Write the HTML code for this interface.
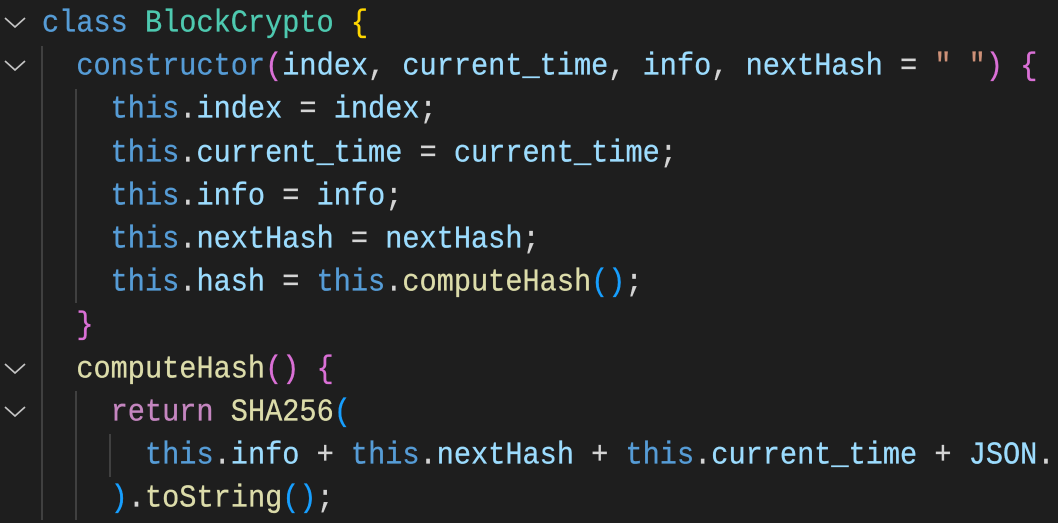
<!DOCTYPE html>
<html><head><style>
html,body{margin:0;padding:0;background:#1e1e1e;width:1058px;height:520px;overflow:hidden}
.l{position:absolute;left:42px;height:43.2px;line-height:43.2px;font-family:"Liberation Mono",monospace;font-size:28.6px;white-space:pre;color:#d4d4d4;transform:scaleY(1.1);transform-origin:0 50%;-webkit-text-stroke:0.3px currentColor;margin-top:2px}
.k{color:#569cd6}.c{color:#4ec9b0}.y{color:#ffd700}.p{color:#da70d6}.v{color:#9cdcfe}.f{color:#dcdcaa}.r{color:#c586c0}.s{color:#ce9178}.b{color:#179fff}
.g{position:absolute;width:2px;background:#404040}
.ch{position:absolute;left:3px;width:24px;height:15px}
</style></head><body>
<svg class="ch" style="top:15px" viewBox="0 0 24 15"><path d="M2 3 L12 12 L22 3" stroke="#c5c5c5" stroke-width="1.7" fill="none"/></svg>
<svg class="ch" style="top:58px" viewBox="0 0 24 15"><path d="M2 3 L12 12 L22 3" stroke="#c5c5c5" stroke-width="1.7" fill="none"/></svg>
<svg class="ch" style="top:361px" viewBox="0 0 24 15"><path d="M2 3 L12 12 L22 3" stroke="#c5c5c5" stroke-width="1.7" fill="none"/></svg>
<svg class="ch" style="top:404px" viewBox="0 0 24 15"><path d="M2 3 L12 12 L22 3" stroke="#c5c5c5" stroke-width="1.7" fill="none"/></svg>
<div class="g" style="left:41px;top:46px;height:474px"></div>
<div class="g" style="left:75px;top:89px;height:214px"></div>
<div class="g" style="left:75px;top:391px;height:129px"></div>
<div class="g" style="left:109px;top:434px;height:43px"></div>
<div class="l" style="top:0"><span class="k">class</span> <span class="c">BlockCrypto</span> <span class="y">{</span></div>
<div class="l" style="top:43.2px">  <span class="k">constructor</span><span class="p">(</span><span class="v">index</span>, <span class="v">current_time</span>, <span class="v">info</span>, <span class="v">nextHash</span> = <span class="s">" "</span><span class="p">)</span> <span class="p">{</span></div>
<div class="l" style="top:86.4px">    <span class="k">this</span>.<span class="v">index</span> = <span class="v">index</span>;</div>
<div class="l" style="top:129.6px">    <span class="k">this</span>.<span class="v">current_time</span> = <span class="v">current_time</span>;</div>
<div class="l" style="top:172.8px">    <span class="k">this</span>.<span class="v">info</span> = <span class="v">info</span>;</div>
<div class="l" style="top:216px">    <span class="k">this</span>.<span class="v">nextHash</span> = <span class="v">nextHash</span>;</div>
<div class="l" style="top:259.2px">    <span class="k">this</span>.<span class="v">hash</span> = <span class="k">this</span>.<span class="f">computeHash</span><span class="b">()</span>;</div>
<div class="l" style="top:302.4px">  <span class="p">}</span></div>
<div class="l" style="top:345.6px">  <span class="f">computeHash</span><span class="p">()</span> <span class="p">{</span></div>
<div class="l" style="top:388.8px">    <span class="r">return</span> <span class="f">SHA256</span><span class="b">(</span></div>
<div class="l" style="top:432px">      <span class="k">this</span>.<span class="v">info</span> + <span class="k">this</span>.<span class="v">nextHash</span> + <span class="k">this</span>.<span class="v">current_time</span> + <span class="v">JSON</span>.</div>
<div class="l" style="top:475.2px">    <span class="b">)</span>.<span class="f">toString</span><span class="b">()</span>;</div>
</body></html>
